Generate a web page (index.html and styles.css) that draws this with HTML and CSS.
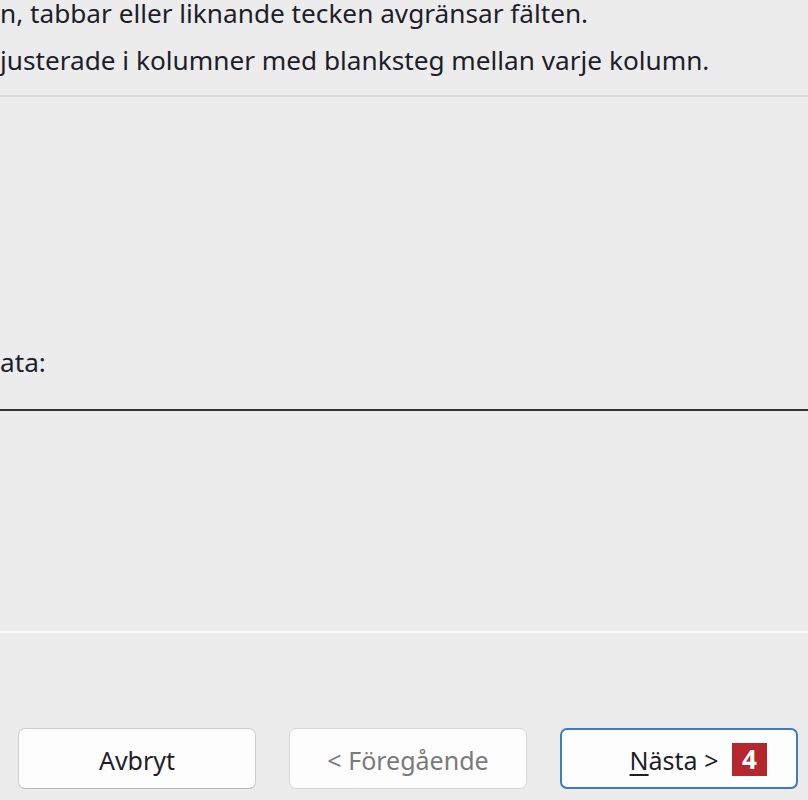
FILE: index.html
```html
<!DOCTYPE html>
<html lang="sv">
<head>
    <meta charset="UTF-8">
    <meta name="viewport" content="width=device-width, initial-scale=1.0">
    <link rel="stylesheet" href="styles.css">
    <title>Textimport</title>
</head>
<body>
    <div class="wizard">
        <div class="desc">
            <p>n, tabbar eller liknande tecken avgränsar fälten.</p>
            <p>justerade i kolumner med blanksteg mellan varje kolumn.</p>
        </div>
        <div class="sep light"></div>
        <div class="middle">
            <p class="label">ata:</p>
        </div>
        <div class="sep dark"></div>
        <div class="preview"></div>
        <div class="sep white"></div>
        <div class="buttons">
            <button class="btn">Avbryt</button>
            <button class="btn" disabled>&lt; Föregående</button>
            <button class="btn primary"><span class="key">N</span>ästa &gt;<span class="badge">4</span></button>
        </div>
    </div>
</body>
</html>
```

FILE: styles.css
```css
*{
    padding: 0;
    margin: 0;
    box-sizing: border-box;
}
body{
    background: #ececec;
    font-family: "Noto Sans", "Open Sans", sans-serif;
    color: #1e1e2a;
    width: 808px;
    height: 800px;
    overflow: hidden;
}
.wizard{
    display: flex;
    flex-direction: column;
    height: 800px;
}
.desc{
    display: flex;
    flex-direction: column;
    gap: 21px;
}
.desc p{
    font-size: 26.2px;
    line-height: 26px;
    white-space: nowrap;
}
.sep{
    width: 100%;
    flex-shrink: 0;
}
.sep.light{
    margin-top: 22px;
    height: 2px;
    background: #d9d9d9;
}
.middle{
    height: 312px;
    flex-shrink: 0;
    display: flex;
    align-items: flex-end;
}
.label{
    font-size: 26.2px;
    line-height: 30px;
    margin-bottom: 32px;
}
.sep.dark{
    height: 2px;
    background: #333;
}
.preview{
    height: 220px;
    flex-shrink: 0;
}
.sep.white{
    height: 2px;
    background: #fbfbfb;
}
.buttons{
    display: flex;
    gap: 33px;
    padding: 95px 0 0 18px;
}
.btn{
    position: relative;
    width: 238px;
    height: 61px;
    padding-top: 3px;
    background: #fdfdfd;
    border: 1px solid #cdcdcd;
    border-bottom-color: #b9b9b9;
    border-radius: 7px;
    font-family: "Noto Sans", "Open Sans", sans-serif;
    font-size: 25px;
    color: #1e1e2a;
}
.btn:disabled{
    color: #7a7a7a;
    border-color: #d6d6d6;
}
.btn.primary{
    border: 2px solid #3d7cc0;
    padding-right: 10px;
}
.key{
    text-decoration: underline;
    text-underline-offset: 4px;
}
.badge{
    position: absolute;
    left: 170px;
    top: 13px;
    width: 35px;
    height: 33px;
    background: #b3272d;
    color: #fff;
    font-weight: bold;
    font-size: 26px;
    line-height: 33px;
    text-align: center;
}
```
